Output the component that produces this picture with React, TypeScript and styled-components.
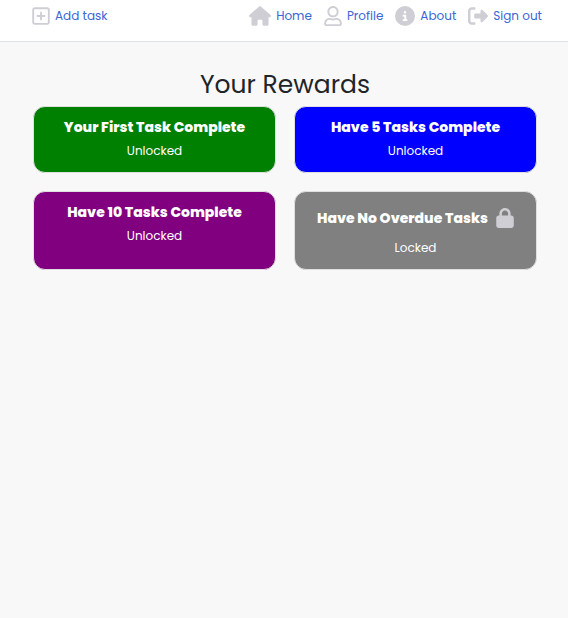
import React from "react";
import styled, { createGlobalStyle } from "styled-components";
import { FaRegUser } from "react-icons/fa";
import {
  FaCircleInfo,
  FaHouse,
  FaLock,
  FaRegSquarePlus,
  FaRightFromBracket,
} from "react-icons/fa6";

const GlobalStyle = createGlobalStyle`
  *, *::before, *::after { box-sizing: border-box; }
  body {
    margin: 0;
    background: #f8f8f8;
    color: #212529;
    font-family: Poppins, Inter, sans-serif;
    font-size: 12px;
    line-height: 20px;
  }
  h1, h2, p { margin: 0; }
`;

const NavBar = styled.header`
  display: flex;
  justify-content: space-between;
  height: 42px;
  padding: 6px 26px 0 32px;
  background: #ffffff;
  border-bottom: 1px solid #dee2e6;
`;

const NavGroup = styled.nav`
  display: flex;
  gap: 12px;
`;

const IconBox = styled.span<{ $width: number }>`
  display: flex;
  flex: none;
  width: ${({ $width }) => $width}px;
  height: 20px;
  color: #cfced4;

  svg {
    width: 100%;
    height: 100%;
  }
`;

const NavLink = styled.a`
  display: flex;
  align-items: center;
  gap: 5px;
  height: 20px;
  color: #3b66d6;
  font-size: 12px;
  line-height: 20px;
  text-decoration: none;
  white-space: nowrap;
`;

const Main = styled.main`
  padding: 25px 31px 24px 33px;
`;

const PageTitle = styled.h1`
  font-size: 25px;
  font-weight: 400;
  line-height: 36px;
  text-align: center;
  margin-bottom: 3px;
`;

const RewardGrid = styled.section`
  display: grid;
  grid-template-columns: repeat(2, minmax(0, 1fr));
  gap: 18px;
`;

const RewardCard = styled.article<{ $color: string }>`
  padding: 10px 15px;
  border: 1px solid #dfdfdf;
  border-radius: 12px;
  background: ${({ $color }) => $color};
  color: #ffffff;
  text-align: center;
`;

const RewardTitle = styled.h2<{ $locked: boolean }>`
  display: flex;
  align-items: center;
  justify-content: center;
  gap: 8px;
  height: ${({ $locked }) => ($locked ? "32px" : "20px")};
  margin-bottom: 3px;
  font-size: 14px;
  font-weight: 800;
  line-height: 20px;
  white-space: nowrap;
`;

const RewardStatus = styled.p`
  font-size: 12px;
  line-height: 22px;
`;

const links = [
  { label: "Home", Icon: FaHouse, width: 22 },
  { label: "Profile", Icon: FaRegUser, width: 18 },
  { label: "About", Icon: FaCircleInfo, width: 20 },
  { label: "Sign out", Icon: FaRightFromBracket, width: 20 },
];

const rewards = [
  { title: "Your First Task Complete", color: "#008000", locked: false },
  { title: "Have 5 Tasks Complete", color: "#0000ff", locked: false },
  { title: "Have 10 Tasks Complete", color: "#800080", locked: false },
  { title: "Have No Overdue Tasks", color: "#808080", locked: true },
];

export default function App() {
  return (
    <>
      <GlobalStyle />
      <NavBar>
        <NavGroup aria-label="Tasks">
          <NavLink href="#add-task">
            <IconBox $width={18}>
              <FaRegSquarePlus aria-hidden />
            </IconBox>
            Add task
          </NavLink>
        </NavGroup>
        <NavGroup aria-label="Main">
          {links.map(({ label, Icon, width }) => (
            <NavLink key={label} href={"#" + label.toLowerCase().replace(" ", "-")}>
              <IconBox $width={width}>
                <Icon aria-hidden />
              </IconBox>
              {label}
            </NavLink>
          ))}
        </NavGroup>
      </NavBar>
      <Main>
        <PageTitle>Your Rewards</PageTitle>
        <RewardGrid>
          {rewards.map(({ title, color, locked }) => (
            <RewardCard key={title} $color={color}>
              <RewardTitle $locked={locked}>
                {title}
                {locked && (
                  <IconBox $width={18}>
                    <FaLock aria-hidden />
                  </IconBox>
                )}
              </RewardTitle>
              <RewardStatus>{locked ? "Locked" : "Unlocked"}</RewardStatus>
            </RewardCard>
          ))}
        </RewardGrid>
      </Main>
    </>
  );
}
